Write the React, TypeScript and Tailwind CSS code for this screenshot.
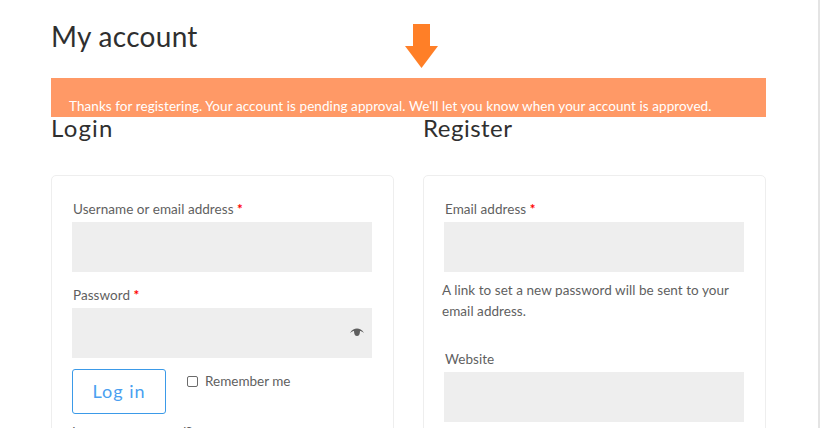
const font = { fontFamily: '"Lato", "Noto Sans", sans-serif' };

function Label({ text, required }: { text: string; required?: boolean }) {
  return (
    <p className="h-[24px] pl-[1px] text-[13.5px] leading-[22px] tracking-[0.05px] text-[#5f5f5f]">
      {text} {required && <span className="font-bold text-[#ff0000]">*</span>}
    </p>
  );
}

function Field({ children }: { children?: React.ReactNode }) {
  return <div className="flex h-[50px] w-[300px] items-center justify-end bg-[#eeeeee] pr-[8px]">{children}</div>;
}

export default function App() {
  return (
    <div style={font} className="relative h-[428px] w-[822px] overflow-hidden bg-white">
      <div className="h-[1200px] w-[820px] border-r-2 border-[#e4e4e4] pl-[51px]">
        <div className="w-[715px]">
          <h1 className="pt-[19px] pb-[1px] text-[28px] leading-[34px] tracking-[0.3px] text-[#2f2f2f]">My account</h1>

          <div className="mt-[24px] flex h-[39px] items-end bg-[#ff9966] pb-[1px] pl-[18px]">
            <p className="text-[13.5px] leading-[20px] tracking-[0.07px] text-white">
              Thanks for registering. Your account is pending approval. We'll let you know when your account is approved.
            </p>
          </div>

          <div className="flex gap-[29px]">
            <section className="w-[343px]">
              <h2 className="h-[58px] text-[24px] leading-[22px] tracking-[1.2px] text-[#2f2f2f]">Login</h2>
              <div className="h-[400px] rounded-[5px] border border-[#eeeeee] pl-[20px] pt-[22px]">
                <Label text="Username or email address" required />
                <Field />
                <div className="mt-[12px]">
                  <Label text="Password" required />
                </div>
                <Field>
                  <svg width="14" height="10" viewBox="0 0 14 10" fill="#5f5f5f">
                    <path d="M0 5 C2 1.5 4.5 0.5 7 0.5 C9.5 0.5 12 1.5 14 5 C12 3.5 10.8 3 10 3 C10 6 9 8 7 8 C5 8 4 6 4 3 C3.2 3 2 3.5 0 5Z" />
                  </svg>
                </Field>
                <div className="mt-[11px] flex items-start">
                  <button className="h-[45px] w-[94px] rounded-[3px] border border-[#3b9ae8] text-[18px] tracking-[1px] text-[#4a9ff0]">
                    Log in
                  </button>
                  <label className="ml-[21px] mt-[1px] flex items-center text-[13.5px] leading-[22px] text-[#5f5f5f]">
                    <span className="mr-[7px] h-[11px] w-[11px] rounded-[2px] border border-[#6b6b6b]" />
                    Remember me
                  </label>
                </div>
                <p className="mt-[7px] text-[13.5px] leading-[22px] text-[#5f5f5f]">Lost your password?</p>
              </div>
            </section>

            <section className="w-[343px]">
              <h2 className="h-[58px] text-[24px] leading-[22px] tracking-[0.5px] text-[#2f2f2f]">Register</h2>
              <div className="h-[400px] rounded-[5px] border border-[#eeeeee] pl-[20px] pt-[22px]">
                <Label text="Email address" required />
                <Field />
                <p className="-ml-[2px] mt-[8px] w-[300px] text-[13.5px] leading-[21px] tracking-[0.05px] text-[#5f5f5f]">
                  A link to set a new password will be sent to your email address.
                </p>
                <div className="mt-[26px]">
                  <Label text="Website" />
                </div>
                <Field />
              </div>
            </section>
          </div>
        </div>
      </div>

      {/* annotation arrow */}
      <svg className="absolute left-[405px] top-[24px]" width="33" height="44" viewBox="0 0 33 44" fill="#ff7f27">
        <path d="M8 0 H25 V22 H33 L16.5 44 L0 22 H8 Z" />
      </svg>
    </div>
  );
}
